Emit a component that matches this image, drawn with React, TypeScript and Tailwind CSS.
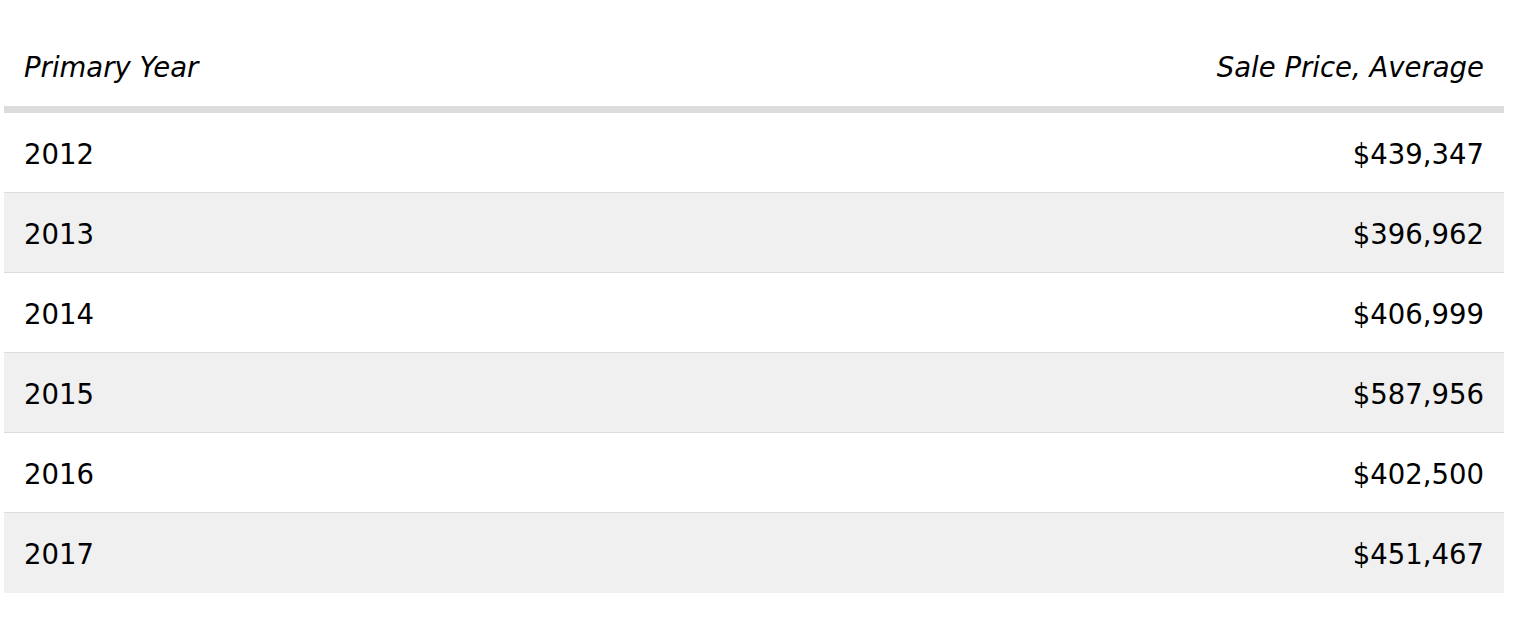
const rows = [
  { year: '2012', price: '$439,347' },
  { year: '2013', price: '$396,962' },
  { year: '2014', price: '$406,999' },
  { year: '2015', price: '$587,956' },
  { year: '2016', price: '$402,500' },
  { year: '2017', price: '$451,467' },
]

export default function App() {
  return (
    <div className="min-h-screen bg-white pt-[27px] pl-[4px] text-[27.5px] text-black" style={{ fontFamily: '"DejaVu Sans", Verdana, sans-serif' }}>
      <div className="w-[1500px]">
        {/* Header */}
        <div className="flex items-center justify-between h-[86px] pt-[3px] px-[20px] border-b-[7px] border-[#dcdcdc] box-border italic">
          <span>Primary Year</span>
          <span>Sale Price, Average</span>
        </div>

        {/* Rows */}
        {rows.map((r, i) => (
          <div
            key={r.year}
            className={`flex items-center justify-between h-[80px] pt-[4px] px-[20px] ${i % 2 === 1 ? 'bg-[#f0f0f0]' : 'bg-white'} ${i < rows.length - 1 ? 'border-b border-[#dddddd]' : ''}`}
          >
            <span>{r.year}</span>
            <span>{r.price}</span>
          </div>
        ))}
      </div>
    </div>
  )
}
